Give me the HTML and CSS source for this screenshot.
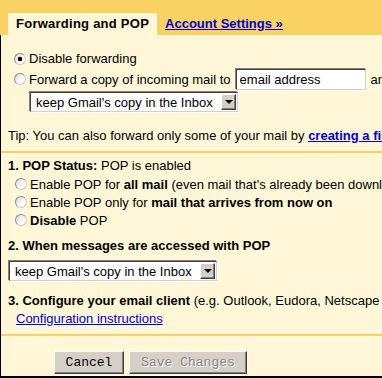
FILE: index.html
```html
<!DOCTYPE html>
<html lang="en">
<head>
  <meta charset="UTF-8">
  <title>Settings - Forwarding and POP</title>
  <link rel="stylesheet" href="styles.css">
</head>
<body>
  <div class="settings">
    <div class="tabs">
      <span class="tab-active">Forwarding and POP</span>
      <a href="#" class="tab-link">Account Settings &raquo;</a>
    </div>
    <div class="panel">
      <div class="section section-fwd">
        <label class="option">
          <input type="radio" name="fwd" class="radio" checked>
          <span>Disable forwarding</span>
        </label>
        <label class="option option-field">
          <input type="radio" name="fwd" class="radio">
          <span>Forward a copy of incoming mail to</span>
          <input type="text" class="textbox" value="email address">
          <span>and</span>
        </label>
        <div class="dropdown dropdown-fwd">
          <span class="dropdown-value">keep Gmail's copy in the Inbox</span>
          <span class="dropdown-btn"></span>
        </div>
        <p class="tip">Tip: You can also forward only some of your mail by <a href="#" class="tip-link">creating a filter!</a></p>
      </div>
      <div class="section section-pop">
        <p class="line"><b>1. POP Status:</b> POP is enabled</p>
        <label class="option option-pop">
          <input type="radio" name="pop" class="radio">
          <span>Enable POP for <b>all mail</b> (even mail that's already been downloaded)</span>
        </label>
        <label class="option option-pop">
          <input type="radio" name="pop" class="radio">
          <span>Enable POP only for <b>mail that arrives from now on</b></span>
        </label>
        <label class="option option-pop">
          <input type="radio" name="pop" class="radio">
          <span><b>Disable</b> POP</span>
        </label>
        <p class="line step-two"><b>2. When messages are accessed with POP</b></p>
        <div class="dropdown dropdown-pop">
          <span class="dropdown-value">keep Gmail's copy in the Inbox</span>
          <span class="dropdown-btn"></span>
        </div>
        <p class="line step-three"><b>3. Configure your email client</b> (e.g. Outlook, Eudora, Netscape Mail)</p>
        <a href="#" class="config-link">Configuration instructions</a>
      </div>
      <div class="section section-buttons">
        <button type="button" class="btn btn-cancel">Cancel</button>
        <button type="button" class="btn btn-save" disabled>Save Changes</button>
      </div>
    </div>
  </div>
</body>
</html>
```

FILE: styles.css
```css
body {
  margin: 0;
  padding: 0;
  font-family: 'Liberation Sans', Arial, sans-serif;
  font-size: 13px;
  color: #000000;
  background-color: #FFF7D7;
  overflow: hidden;
}
.settings {
  width: 700px;
}
.tabs {
  display: flex;
  align-items: flex-end;
  height: 35px;
  padding: 13px 0 0 8px;
  box-sizing: border-box;
  background-color: #FAD163;
}
.tab-active {
  height: 22px;
  line-height: 22px;
  padding: 0 8px;
  background-color: #FFF7D7;
  font-weight: 700;
  letter-spacing: 0.25px;
}
.tab-link {
  margin-left: 8px;
  line-height: 22px;
  font-weight: 700;
  color: #0000CC;
}
.panel {
  height: 343px;
  box-sizing: border-box;
  border-left: 1px solid #000000;
  border-bottom: 2px solid #000000;
  padding-left: 7px;
}
.section + .section {
  border-top: 2px solid #FAD163;
  margin-left: -7px;
  padding-left: 7px;
}
.section-fwd {
  padding: 14px 0 6px;
}
.option {
  display: flex;
  align-items: center;
  gap: 3px;
  margin-left: 6px;
  height: 19px;
  white-space: nowrap;
}
.option-field {
  height: 22px;
}
.option-pop {
  height: 18px;
  margin-left: 7px;
}
.radio {
  appearance: none;
  -webkit-appearance: none;
  width: 12px;
  height: 12px;
  margin: 0;
  flex: none;
  border-radius: 50%;
  border: 1px solid #8B8B8B;
  border-right-color: #C8C8C8;
  border-bottom-color: #C8C8C8;
  box-sizing: border-box;
  background: linear-gradient(135deg, #D8D8D8, #FFFFFF 70%);
}
.radio:checked {
  background: radial-gradient(circle, #000000 0 2px, transparent 2.6px), linear-gradient(135deg, #D8D8D8, #FFFFFF 70%);
}
.textbox {
  width: 130px;
  height: 21px;
  margin: 0 2px 0 2px;
  padding: 1px 3px 0;
  box-sizing: border-box;
  font-family: 'Liberation Sans', Arial, sans-serif;
  font-size: 13px;
  color: #000000;
  background-color: #FFFFFF;
  border: 1px solid #404040;
  border-right-color: #D4D0C8;
  border-bottom-color: #D4D0C8;
  box-shadow: -1px -1px 0 #808080, 1px 1px 0 #FFFFFF;
  outline: none;
}
.dropdown {
  display: flex;
  align-items: center;
  height: 20px;
  box-sizing: border-box;
  background-color: #FFFFFF;
  border: 1px solid #404040;
  border-right-color: #D4D0C8;
  border-bottom-color: #D4D0C8;
  box-shadow: -1px -1px 0 #808080, 1px 1px 0 #FFFFFF;
  white-space: nowrap;
}
.dropdown-fwd {
  width: 208px;
  margin: 2px 0 0 22px;
}
.dropdown-pop {
  width: 208px;
  margin: 6px 0 0 1px;
}
.dropdown-value {
  flex: 1;
  padding-left: 5px;
}
.dropdown-btn {
  position: relative;
  width: 15px;
  height: 16px;
  margin-right: 1px;
  box-sizing: border-box;
  background-color: #D4D0C8;
  border: 1px solid #FFFFFF;
  border-right-color: #404040;
  border-bottom-color: #404040;
  box-shadow: inset -1px -1px 0 #808080;
}
.dropdown-btn::after {
  content: "";
  position: absolute;
  left: 3px;
  top: 5px;
  border-left: 4px solid transparent;
  border-right: 4px solid transparent;
  border-top: 4px solid #000000;
}
.tip {
  margin: 15px 0 0;
  line-height: 18px;
  white-space: nowrap;
}
.tip-link {
  font-weight: 700;
  color: #0000CC;
}
.section-pop {
  padding: 4px 0 6px;
}
.line {
  margin: 0;
  line-height: 18px;
  white-space: nowrap;
}
.step-two {
  margin-top: 8px;
}
.step-three {
  margin-top: 11px;
}
.config-link {
  display: inline-block;
  margin-left: 8px;
  line-height: 18px;
  color: #0000CC;
}
.section.section-buttons {
  display: flex;
  gap: 5px;
  padding: 15px 0 0 53px;
}
.btn {
  height: 23px;
  padding: 0;
  font-family: 'Liberation Mono', 'Courier New', monospace;
  font-size: 13px;
  font-weight: 400;
  color: #000000;
  background-color: #D4D0C8;
  border: 1px solid #FFFFFF;
  border-right-color: #404040;
  border-bottom-color: #404040;
  box-shadow: inset -1px -1px 0 #808080;
}
.btn-cancel {
  width: 70px;
}
.btn-save {
  width: 118px;
  color: #8A877F;
  text-shadow: 1px 1px 0 #FFFFFF;
}
```
